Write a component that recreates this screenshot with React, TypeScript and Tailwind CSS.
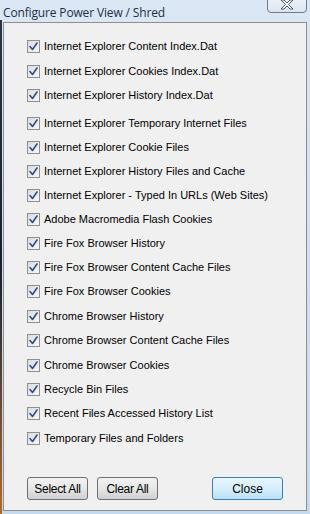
import React from 'react';

// --- Items shown in the dialog, with the extra space that follows some rows ---
const items: { label: string; after?: number }[] = [
  { label: 'Internet Explorer Content Index.Dat', after: 1 },
  { label: 'Internet Explorer Cookies Index.Dat' },
  { label: 'Internet Explorer History Index.Dat', after: 4 },
  { label: 'Internet Explorer Temporary Internet Files' },
  { label: 'Internet Explorer Cookie Files' },
  { label: 'Internet Explorer History Files and Cache' },
  { label: 'Internet Explorer - Typed In URLs (Web Sites)' },
  { label: 'Adobe Macromedia Flash Cookies' },
  { label: 'Fire Fox Browser History' },
  { label: 'Fire Fox Browser Content Cache Files' },
  { label: 'Fire Fox Browser Cookies', after: 1 },
  { label: 'Chrome Browser History' },
  { label: 'Chrome Browser Content Cache Files', after: 1 },
  { label: 'Chrome Browser Cookies' },
  { label: 'Recycle Bin Files' },
  { label: 'Recent Files Accessed History List', after: 1 },
  { label: 'Temporary Files and Folders' },
];

const CheckBox = () => (
  <span className="w-[13px] h-[13px] shrink-0 border border-[#8f8f8f] bg-gradient-to-br from-[#dcdcdc] to-[#f8f8f8] flex items-center justify-center">
    <svg width="9" height="9" viewBox="0 0 9 9" fill="none">
      <path d="M1 4.5 L3.5 7.5 L8 1" stroke="#2c4f8a" strokeWidth="1.6" strokeLinecap="round" strokeLinejoin="round" />
    </svg>
  </span>
);

export default function App() {
  return (
    <div
      className="relative w-[310px] h-[514px] overflow-hidden bg-gradient-to-b from-[#dbe7f4] via-[#cfe0f2] to-[#c6daee] flex flex-col"
      style={{ fontFamily: '"Liberation Sans", Arial, sans-serif' }}
    >
      {/* left edge showing the desktop through the glass frame */}
      <div className="absolute left-0 top-[20px] bottom-0 w-[2px] bg-gradient-to-b from-[#2a3444] via-[#1a1f2a] to-[#b26a24]" />

      {/* caption close button (cropped at the top) */}
      <div className="absolute left-[267px] top-[-4px] w-[40px] h-[17px] rounded-b-[4px] border border-[#6f7c8c] bg-gradient-to-b from-[#eef2f7] to-[#dce5ef] flex items-start justify-center pt-[3px]">
        <svg width="14" height="10" viewBox="0 0 14 10" fill="none">
          <path d="M1 0 H4 L7 3 L10 0 H13 L8.5 4.5 L13 9 H10 L7 6 L4 9 H1 L5.5 4.5 Z" fill="#ffffff" stroke="#4f5a69" strokeWidth="1" strokeLinejoin="round" />
        </svg>
      </div>

      {/* title bar */}
      <div className="h-[22px] shrink-0 pl-[3px] pt-0">
        <span className="text-[12px] text-[#1e2f48] tracking-[-0.15px]" style={{ fontFamily: '"Open Sans", "Noto Sans", sans-serif' }}>
          Configure Power View / Shred
        </span>
      </div>

      {/* client area */}
      <div className="ml-[3px] mr-[3px] h-[489px] border border-[#8a8f96] bg-[#f0f0f0] flex flex-col pl-[23px] pt-[11px]">
        <div className="flex flex-col">
          {items.map((item, i) => (
            <div
              key={i}
              className="h-[24px] flex items-center gap-[4px]"
              style={{ marginBottom: item.after ?? 0 }}
            >
              <CheckBox />
              <span className="text-[11px] text-black leading-none whitespace-nowrap">{item.label}</span>
            </div>
          ))}
        </div>

        <div className="mt-[27px] flex items-center">
          <button className="w-[61px] h-[23px] rounded-[3px] border border-[#707070] bg-gradient-to-b from-[#f2f2f2] via-[#e6e6e6] to-[#d0d0d0] text-[12px] text-black tracking-[-0.3px]">
            Select All
          </button>
          <button className="ml-[9px] w-[61px] h-[23px] rounded-[3px] border border-[#707070] bg-gradient-to-b from-[#f2f2f2] via-[#e6e6e6] to-[#d0d0d0] text-[12px] text-black tracking-[-0.3px]">
            Clear All
          </button>
          <button className="ml-[54px] w-[71px] h-[23px] rounded-[3px] border border-[#3c7fb1] bg-gradient-to-b from-[#e9f6fd] via-[#d6effb] to-[#b8e0f5] text-[12px] text-black">
            Close
          </button>
        </div>
      </div>
    </div>
  );
}
